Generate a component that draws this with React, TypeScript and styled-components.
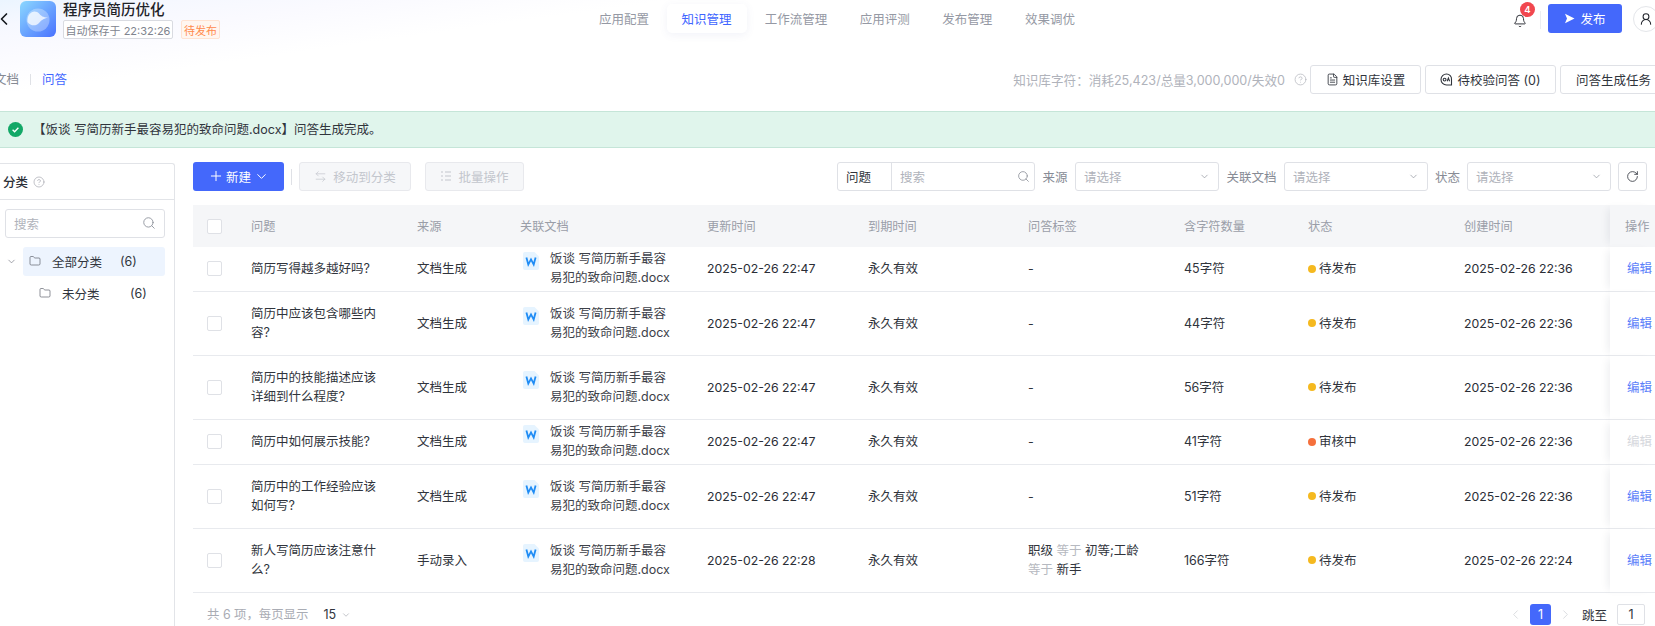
import React from 'react';
import styled, { createGlobalStyle } from 'styled-components';
import { ArrowLeftRight, Bell, ChevronDown, ChevronLeft, ChevronRight, CircleHelp, FileText, Folder, Plus, RotateCw, Search, UserRound } from 'lucide-react';

const Global = createGlobalStyle`
  html, body { margin: 0; padding: 0; width: 1655px; height: 626px; overflow: hidden; background: #fff; }
  body, button, input { font-family: Inter, "Noto Sans CJK SC", "Liberation Sans", sans-serif; }
  * { box-sizing: border-box; }
`;

const Page = styled.div`
  width: 1655px; height: 626px; overflow: hidden; display: flex; flex-direction: column;
  font-size: 12.5px; color: #30343c;
  background: linear-gradient(172deg, #ebf5ff 0%, #f6f8ff 3%, #fafaff 6%, #ffffff 11%) no-repeat;
`;
const Header = styled.header`height: 37px; display: flex; align-items: flex-start; flex: none;`;
const Brand = styled.div`width: 584px; display: flex; align-items: flex-start; flex: none;`;
const Back = styled.div`width: 20px; height: 37px; margin-left: -6px; margin-right: 6px; display: flex; align-items: center; color: #15181e; svg { display:block; }`;
const Logo = styled.svg`width: 36px; height: 36px; margin-top: 1px; flex: none;`;
const BrandText = styled.div`margin-left: 7px; display: flex; flex-direction: column;`;
const Title = styled.div`font-size: 14.5px; line-height: 20px; font-weight: 500; color: #1f2329; white-space: nowrap;`;
const TagRow = styled.div`display: flex; gap: 8px;`;
const SaveTag = styled.span`height: 19px; width: 110px; display: flex; align-items: center; justify-content: center; border: 1px solid #d9dbe1; border-radius: 2px; font-size: 11px; color: #80848e; background: #fff; white-space: nowrap;`;
const StateTag = styled.span`height: 19px; width: 39px; display: flex; align-items: center; justify-content: center; border: 1px solid #ffe3d2; border-radius: 2px; font-size: 11px; color: #ff8a4c; background: #fff6f0;`;
const Nav = styled.nav`display: flex; align-items: center; height: 29px; margin-top: 4px;`;
const NavItem = styled.span<{ $active?: boolean }>`
  height: 29px; padding: 0 15px; margin-right: ${p => (p.$active ? '3px' : '2.6px')}; display: flex; align-items: center; border-radius: 5px; white-space: nowrap;
  color: ${p => (p.$active ? '#3f66ff' : '#9599a4')}; background: ${p => (p.$active ? '#fff' : 'transparent')};
  box-shadow: ${p => (p.$active ? '0 2px 8px rgba(80,90,160,.08)' : 'none')};
`;
const HeaderRight = styled.div`margin-left: auto; display: flex; align-items: flex-start; height: 37px;`;
const BellBox = styled.div`position: relative; width: 20px; height: 33px; margin-top: 4px; display: flex; align-items: center; justify-content: center; color: #23262d;`;
const Badge = styled.span`position: absolute; left: 10px; top: -2px; width: 15px; height: 15px; border-radius: 50%; background: #f1474f; color: #fff; font-size: 9.5px; font-weight: 600; display: flex; align-items: center; justify-content: center;`;
const VDivider = styled.span`width: 1px; height: 18px; margin: 11px 7px 0 10px; background: #eceef2;`;
const PublishButton = styled.button`width: 74px; height: 29px; margin-top: 4px; border: 0; border-radius: 3px; background: #4468fb; color: #fff; font-size: 12.5px; display: flex; align-items: center; justify-content: center; gap: 5px; padding: 0;`;
const Avatar = styled.span`width: 26px; height: 26px; margin: 6px -4px 0 11px; border: 1px solid #e4e6ea; border-radius: 50%; background: #fff; display: flex; align-items: center; justify-content: center; color: #23262d;`;

const SubBar = styled.div`height: 74px; padding-top: 28px; display: flex; align-items: flex-start; flex: none; margin: 0 -15px 0 -6px;`;
const SubTab = styled.span<{ $active?: boolean }>`line-height: 29px; color: ${p => (p.$active ? '#3f66ff' : '#858993')};`;
const SubSep = styled.span`width: 1px; height: 11px; margin: 9px 11px 0 11px; background: #dfe1e6;`;
const Stats = styled.div`margin-left: auto; display: flex; align-items: center; height: 29px; color: #b0b3bb; font-size: 12.6px; white-space: nowrap; svg { margin: 0 0 0 9px; }`;
const OutlineButton = styled.button<{ $w: number; $first?: boolean; $start?: boolean }>`
  width: ${p => p.$w}px; height: 29px; margin-left: ${p => (p.$first ? '3px' : '4px')}; flex: none; background: #fff; border: 1px solid #dfe1e6; border-radius: 3px; color: #30343c; font-size: 12.5px;
  display: flex; align-items: center; justify-content: ${p => (p.$start ? 'flex-start' : 'center')}; gap: 4px; padding: ${p => (p.$start ? '0 0 0 15px' : '0')}; white-space: nowrap;
`;

const Alert = styled.div`height: 37px; flex: none; background: #e0f5ec; border-top: 1px solid #c5e5d8; border-bottom: 1px solid #c5e5d8; display: flex; align-items: center; padding-left: 8px; gap: 10px; color: #30343c;`;
const AlertText = styled.span`margin-top: -2px;`;
const Main = styled.main`flex: 1; min-height: 0; display: flex; gap: 18px;`;
const Sidebar = styled.aside`width: 175px; flex: none; margin-top: 15px; border-top: 1px solid #e2e4e8; border-right: 1px solid #e2e4e8; border-top-right-radius: 3px;`;
const SideHead = styled.div`height: 36px; padding-left: 3px; display: flex; align-items: center; gap: 5px; border-bottom: 1px solid #e2e4e8; font-weight: 500; color: #2a2e36; svg { color: #a0a3ab; }`;
const SideSearch = styled.div`margin: 9px 9px 9px 5px; height: 29px; border: 1px solid #dfe1e6; border-radius: 3px; display: flex; align-items: center; justify-content: space-between; padding: 0 8px 1px; color: #b0b3bb; svg { color: #8c9099; }`;
const TreeRow = styled.div<{ $indent: number }>`
  height: 29px; margin: 0 9px 3px 0; padding-left: ${p => p.$indent}px; display: flex; align-items: center; color: #30343c;
`;
const Chevron = styled.span`width: 23px; flex: none; display: flex; padding-left: 6px; color: #777b85;`;
const TreeLabel = styled.div<{ $active?: boolean }>`
  flex: 1; height: 29px; display: flex; align-items: center; padding: 0 0 1px 6px; border-radius: 3px; background: ${p => (p.$active ? '#edf4fe' : 'transparent')};
  svg { flex: none; color: #5f636d; }
`;
const TreeName = styled.span`width: 68px; margin-left: 11px; white-space: nowrap;`;
const Content = styled.section`flex: 1; min-width: 0; display: flex; flex-direction: column; padding-top: 14px;`;
const Toolbar = styled.div`height: 29px; display: flex; align-items: center; flex: none; padding-right: 8px;`;
const PrimaryButton = styled.button`width: 91px; height: 29px; border: 0; border-radius: 3px; background: #4468fb; color: #fff; font-size: 12.5px; display: flex; align-items: center; gap: 2px; padding: 0 0 1px 15px; svg:last-child { margin-left: 1px; }`;
const ToolSep = styled.span`width: 1px; height: 16px; margin: 0 7px; background: #dfe1e6;`;
const DisabledButton = styled.button<{ $w: number; $ml: number }>`
  width: ${p => p.$w}px; height: 29px; margin-left: ${p => p.$ml}px; border: 1px solid #e8e9ed; border-radius: 3px; background: #f6f7f9; color: #c3c6cd; font-size: 12.5px; display: flex; align-items: center; justify-content: center; gap: 6px; padding: 0 0 1px; white-space: nowrap;
`;
const SearchGroup = styled.div`margin-left: auto; width: 198px; height: 29px; border: 1px solid #dfe1e6; border-radius: 3px; display: flex; align-items: center; background: #fff;`;
const SearchField = styled.span`width: 54px; height: 27px; padding: 0 0 1px 8px; border-right: 1px solid #dfe1e6; display: flex; align-items: center; color: #30343c;`;
const SearchHint = styled.span`flex: 1; padding: 0 8px 1px; display: flex; align-items: center; justify-content: space-between; color: #b0b3bb; svg { color: #8c9099; margin-right: -4px; }`;
const FilterLabel = styled.span<{ $w: number }>`width: ${p => p.$w}px; flex: none; padding-bottom: 1px; color: #878b95; white-space: nowrap; display: flex; justify-content: center;`;
const SelectBox = styled.div`width: 144px; height: 29px; flex: none; border: 1px solid #dfe1e6; border-radius: 3px; display: flex; align-items: center; justify-content: space-between; padding: 0 8px 1px; color: #b0b3bb; svg { color: #8c9099; }`;
const RefreshButton = styled.button`width: 29px; height: 29px; margin-left: 7px; flex: none; border: 1px solid #dfe1e6; border-radius: 3px; background: #fff; color: #30343c; display: flex; align-items: center; justify-content: center; padding: 0;`;

const Table = styled.table`width: 1462px; margin-top: 14px; border-collapse: separate; border-spacing: 0; table-layout: fixed; flex: none;`;
const Th = styled.th<{ $fixed?: boolean }>`
  height: 42px; padding: 0 0 0 14px; background: #f5f6f8; color: #9a9ea8; font-weight: 400; font-size: 12.2px; text-align: left; white-space: nowrap;
  ${p => p.$fixed ? 'box-shadow: -6px 0 8px -4px rgba(30,40,70,.08); padding-left: 15px;' : ''}
`;
const Tr = styled.tr<{ $h: number }>`height: ${p => p.$h}px;`;
const Td = styled.td<{ $fixed?: boolean }>`
  padding: 0 0 1px 14px; border-bottom: 1px solid #e8eaee; vertical-align: middle; line-height: 19px; color: #30343c; overflow: hidden;
  ${p => p.$fixed ? 'box-shadow: -6px 0 8px -4px rgba(30,40,70,.08); padding-left: 17px; background: #fff;' : ''}
`;
const Check = styled.span`display: block; width: 15px; height: 15px; border: 1px solid #dfe1e6; border-radius: 2px; background: #fff;`;
const Question = styled.div`width: 128px;`;
const DocCell = styled.div`display: flex; align-items: flex-start; gap: 11px; margin-left: 3px; margin-top: -1px;`;
const DocIcon = styled.svg`width: 16px; height: 18px; flex: none; margin-top: 3px;`;
const DocName = styled.div`width: 124px; color: #3d4149;`;
const Time = styled.span`white-space: nowrap; font-size: 12.3px; color: #2a2e36;`;
const TagText = styled.div`width: 118px;`;
const Muted = styled.span`color: #b6b9c0;`;
const Status = styled.div`display: flex; align-items: center; gap: 3px; white-space: nowrap;`;
const Dot = styled.span<{ $c: string }>`width: 8px; height: 8px; border-radius: 50%; background: ${p => p.$c};`;
const EditLink = styled.span<{ $off?: boolean }>`color: ${p => (p.$off ? '#d6d8dd' : '#5c7ffa')};`;
const Footer = styled.div`flex: 1; display: flex; align-items: flex-start; padding: 11px 10px 0 14px; min-height: 0;`;
const Total = styled.span`color: #a9acb4; font-size: 12.4px; line-height: 21px; white-space: nowrap;`;
const PageSize = styled.span`margin-left: 15px; display: flex; align-items: center; gap: 5px; line-height: 21px; color: #30343c; svg { color: #a0a3ab; }`;
const Pager = styled.div`margin-left: auto; display: flex; align-items: center; height: 21px; color: #30343c;`;
const PageArrow = styled.span`display: flex; color: #cfd1d6;`;
const PageOne = styled.span`width: 21px; height: 21px; margin: 0 7px; border-radius: 3px; background: #4468fb; color: #fff; display: flex; align-items: center; justify-content: center;`;
const JumpLabel = styled.span`margin-left: 9px;`;
const JumpInput = styled.span`width: 28px; height: 21px; margin-left: 10px; border: 1px solid #dfe1e6; border-radius: 2px; display: flex; align-items: center; justify-content: center;`;

const WordIcon = () => (
  <DocIcon viewBox="0 0 16 18">
    <path d="M2 0h9.5L16 4.5V16a2 2 0 0 1-2 2H2a2 2 0 0 1-2-2V2a2 2 0 0 1 2-2z" fill="#e6f4ff" />
    <path d="M3.4 5.5l1.9 7.1L8 7.4l2.7 5.2 1.9-7.1" fill="none" stroke="#1f8cf5" strokeWidth="1.8" />
  </DocIcon>
);

const rows = [
  { h: 45, q: '简历写得越多越好吗?', src: '文档生成', up: '2025-02-26 22:47', tag: '-', n: '45字符', st: '待发布', c: '2025-02-26 22:36' },
  { h: 64, q: '简历中应该包含哪些内容?', src: '文档生成', up: '2025-02-26 22:47', tag: '-', n: '44字符', st: '待发布', c: '2025-02-26 22:36' },
  { h: 64, q: '简历中的技能描述应该详细到什么程度?', src: '文档生成', up: '2025-02-26 22:47', tag: '-', n: '56字符', st: '待发布', c: '2025-02-26 22:36' },
  { h: 45, q: '简历中如何展示技能?', src: '文档生成', up: '2025-02-26 22:47', tag: '-', n: '41字符', st: '审核中', c: '2025-02-26 22:36' },
  { h: 64, q: '简历中的工作经验应该如何写?', src: '文档生成', up: '2025-02-26 22:47', tag: '-', n: '51字符', st: '待发布', c: '2025-02-26 22:36' },
  { h: 64, q: '新人写简历应该注意什么?', src: '手动录入', up: '2025-02-26 22:28', tag: 'x', n: '166字符', st: '待发布', c: '2025-02-26 22:24' },
];
const widths = [44, 166, 103, 187, 161, 160, 156, 124, 156, 160, 45];
const heads = ['问题', '来源', '关联文档', '更新时间', '到期时间', '问答标签', '含字符数量', '状态', '创建时间'];
const navs = ['应用配置', '知识管理', '工作流管理', '应用评测', '发布管理', '效果调优'];

export default function App() {
  return (
    <Page>
      <Global />
      <Header>
        <Brand>
          <Back><ChevronLeft size={22} strokeWidth={2} /></Back>
          <Logo viewBox="0 0 36 36">
            <defs>
              <linearGradient id="lg" x1="0" y1="0" x2="1" y2="1">
                <stop offset="0" stopColor="#8bd8ff" />
                <stop offset="1" stopColor="#4a72ff" />
              </linearGradient>
            </defs>
            <rect width="36" height="36" rx="6" fill="url(#lg)" />
            <circle cx="18" cy="19" r="11.5" fill="#fff" fillOpacity=".3" />
            <path d="M7.5 21C6.8 12 14.5 7.5 19.5 13c1.5 1.7 3.5 3.5 8.5 3.5-3 .8-6.5 2.2-9 5.5-3 3.5-8.5 3-11.5-1z" fill="#fff" fillOpacity=".75" />
          </Logo>
          <BrandText>
            <Title>程序员简历优化</Title>
            <TagRow>
              <SaveTag>自动保存于 22:32:26</SaveTag>
              <StateTag>待发布</StateTag>
            </TagRow>
          </BrandText>
        </Brand>
        <Nav>
          {navs.map((n, i) => <NavItem key={n} $active={i === 1}>{n}</NavItem>)}
        </Nav>
        <HeaderRight>
          <BellBox>
            <Bell size={14} strokeWidth={1.6} />
            <Badge>4</Badge>
          </BellBox>
          <VDivider />
          <PublishButton>
            <svg width="11" height="11" viewBox="0 0 11 11"><path d="M1 .8l9.5 4.7L1 10.2l2-4.7z" fill="#fff" /></svg>
            发布
          </PublishButton>
          <Avatar><UserRound size={14} strokeWidth={1.8} /></Avatar>
        </HeaderRight>
      </Header>

      <SubBar>
        <SubTab>文档</SubTab>
        <SubSep />
        <SubTab $active>问答</SubTab>
        <Stats>
          知识库字符：消耗25,423/总量3,000,000/失效0
          <CircleHelp size={13} strokeWidth={1.3} />
        </Stats>
        <OutlineButton $w={111} $first><FileText size={13} strokeWidth={1.6} />知识库设置</OutlineButton>
        <OutlineButton $w={131}>
          <svg width="13" height="13" viewBox="0 0 13 13" fill="none" stroke="#30343c" strokeWidth="1.1">
            <path d="M6.5 1a5.5 5.5 0 1 0 0 11h5V6.5A5 5 0 0 0 6.5 1z" />
            <circle cx="4.6" cy="6.6" r="1.4" />
            <path d="M7.2 8.2l1.2-3.2 1.2 3.2" />
          </svg>
          待校验问答 (0)
        </OutlineButton>
        <OutlineButton $w={110} $start>问答生成任务</OutlineButton>
      </SubBar>

      <Alert>
        <svg width="15" height="15" viewBox="0 0 15 15">
          <circle cx="7.5" cy="7.5" r="7.5" fill="#12a867" />
          <path d="M4.6 7.7l2 2 3.8-4" fill="none" stroke="#fff" strokeWidth="1.3" />
        </svg>
        <AlertText>【饭谈 写简历新手最容易犯的致命问题.docx】问答生成完成。</AlertText>
      </Alert>

      <Main>
        <Sidebar>
          <SideHead>分类<CircleHelp size={12} strokeWidth={1.3} /></SideHead>
          <SideSearch>搜索<Search size={14} strokeWidth={1.5} /></SideSearch>
          <TreeRow $indent={0}>
            <Chevron><ChevronDown size={11} strokeWidth={1.5} /></Chevron>
            <TreeLabel $active><Folder size={12} strokeWidth={1.4} /><TreeName>全部分类</TreeName>(6)</TreeLabel>
          </TreeRow>
          <TreeRow $indent={33}>
            <TreeLabel><Folder size={12} strokeWidth={1.4} /><TreeName>未分类</TreeName>(6)</TreeLabel>
          </TreeRow>
        </Sidebar>

        <Content>
          <Toolbar>
            <PrimaryButton><Plus size={16} strokeWidth={1.5} />新建<ChevronDown size={15} strokeWidth={1.6} /></PrimaryButton>
            <ToolSep />
            <DisabledButton $w={112} $ml={0}><ArrowLeftRight size={13} strokeWidth={1.3} />移动到分类</DisabledButton>
            <DisabledButton $w={99} $ml={14}>
              <svg width="12" height="12" viewBox="0 0 12 12" fill="none" stroke="#c3c6cd" strokeWidth="1">
                <path d="M1 2h2M1 6h2M1 10h2M5 2h6M5 6h6M5 10h6" />
              </svg>
              批量操作
            </DisabledButton>
            <SearchGroup>
              <SearchField>问题</SearchField>
              <SearchHint>搜索<Search size={13} strokeWidth={1.5} /></SearchHint>
            </SearchGroup>
            <FilterLabel $w={40}>来源</FilterLabel>
            <SelectBox>请选择<ChevronDown size={11} strokeWidth={1.5} /></SelectBox>
            <FilterLabel $w={65}>关联文档</FilterLabel>
            <SelectBox>请选择<ChevronDown size={11} strokeWidth={1.5} /></SelectBox>
            <FilterLabel $w={39}>状态</FilterLabel>
            <SelectBox>请选择<ChevronDown size={11} strokeWidth={1.5} /></SelectBox>
            <RefreshButton><RotateCw size={13} strokeWidth={1.5} /></RefreshButton>
          </Toolbar>

          <Table>
            <colgroup>{widths.map((w, i) => <col key={i} style={{ width: w }} />)}</colgroup>
            <thead>
              <tr>
                <Th><Check /></Th>
                {heads.map(h => <Th key={h}>{h}</Th>)}
                <Th $fixed>操作</Th>
              </tr>
            </thead>
            <tbody>
              {rows.map((r, i) => (
                <Tr key={i} $h={r.h}>
                  <Td><Check /></Td>
                  <Td><Question>{r.q}</Question></Td>
                  <Td>{r.src}</Td>
                  <Td>
                    <DocCell>
                      <WordIcon />
                      <DocName>饭谈 写简历新手最容易犯的致命问题.docx</DocName>
                    </DocCell>
                  </Td>
                  <Td><Time>{r.up}</Time></Td>
                  <Td>永久有效</Td>
                  <Td>{r.tag === 'x' ? <TagText>职级 <Muted>等于</Muted> 初等;工龄 <Muted>等于</Muted> 新手</TagText> : r.tag}</Td>
                  <Td>{r.n}</Td>
                  <Td>
                    <Status><Dot $c={r.st === '审核中' ? '#f5703c' : '#f5b91f'} />{r.st}</Status>
                  </Td>
                  <Td><Time>{r.c}</Time></Td>
                  <Td $fixed><EditLink $off={r.st === '审核中'}>编辑</EditLink></Td>
                </Tr>
              ))}
            </tbody>
          </Table>

          <Footer>
            <Total>共 6 项，每页显示</Total>
            <PageSize>15<ChevronDown size={10} strokeWidth={1.5} /></PageSize>
            <Pager>
              <PageArrow><ChevronLeft size={15} strokeWidth={1.2} /></PageArrow>
              <PageOne>1</PageOne>
              <PageArrow><ChevronRight size={15} strokeWidth={1.2} /></PageArrow>
              <JumpLabel>跳至</JumpLabel>
              <JumpInput>1</JumpInput>
            </Pager>
          </Footer>
        </Content>
      </Main>
    </Page>
  );
}
